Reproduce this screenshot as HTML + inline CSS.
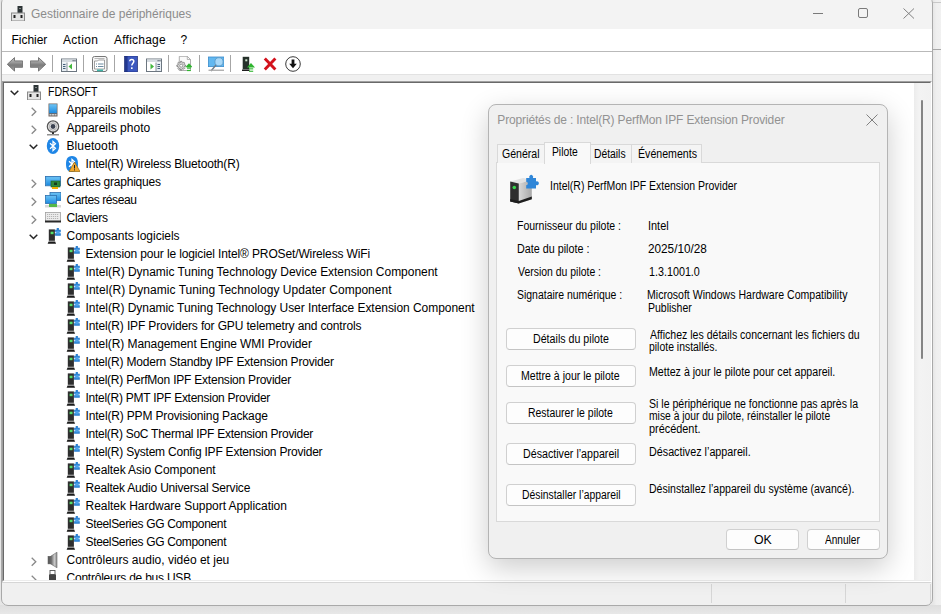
<!DOCTYPE html><html><head><meta charset="utf-8"><title>Gestionnaire de périphériques</title><style>
*{margin:0;padding:0;box-sizing:border-box}
html,body{width:941px;height:614px;overflow:hidden}
body{position:relative;background:#e6e6e6;font-family:"Liberation Sans",sans-serif;color:#000}
.a{position:absolute}
.t{position:absolute;white-space:pre;font-size:12px;line-height:18px;letter-spacing:-0.04px;color:#000}
.d{position:absolute;white-space:pre;font-size:12px;line-height:13px;letter-spacing:0;color:#000;transform-origin:0 0}
svg.i{position:absolute;width:16px;height:16px;overflow:visible}
.sep{position:absolute;top:55px;width:1px;height:17px;background:#a6a6a6}
.btn{position:absolute;background:#fdfdfd;border:1px solid #d0d0d0;border-bottom-color:#c4c4c4;border-radius:4px;text-align:center;font-size:11.5px;letter-spacing:-0.48px;line-height:20px}
</style></head><body>

<svg width="0" height="0" style="position:absolute">
<defs>
<linearGradient id="gArrow" x1="0" y1="0" x2="0" y2="1"><stop offset="0" stop-color="#c4c4c4"/><stop offset="0.35" stop-color="#9c9c9c"/><stop offset="0.55" stop-color="#7c7c7c"/><stop offset="1" stop-color="#a4a4a4"/></linearGradient>
<linearGradient id="gBlue" x1="0" y1="0" x2="0" y2="1"><stop offset="0" stop-color="#6cc3f5"/><stop offset="1" stop-color="#1d8be0"/></linearGradient>
<linearGradient id="gHelp" x1="0" y1="0" x2="1" y2="1"><stop offset="0" stop-color="#4a6fd8"/><stop offset="1" stop-color="#1c2f8f"/></linearGradient>
<linearGradient id="gSpk" x1="0" y1="0" x2="1" y2="0"><stop offset="0" stop-color="#5a5a5a"/><stop offset="0.6" stop-color="#c8c8c8"/><stop offset="1" stop-color="#8a8a8a"/></linearGradient>
<linearGradient id="gTower" x1="0" y1="0" x2="1" y2="0"><stop offset="0" stop-color="#d8d8d8"/><stop offset="1" stop-color="#a8a8a8"/></linearGradient>

<symbol id="iComp" viewBox="0 0 16 16">
 <rect x="7.5" y="1" width="5" height="7" fill="#2d3436"/>
 <rect x="9.5" y="3" width="1" height="1" fill="#ddd"/>
 <rect x="1.5" y="8" width="13" height="8" fill="#e4e4e4" stroke="#8a8a8a" stroke-width="1"/>
 <rect x="3.5" y="10" width="2" height="3" fill="#222"/>
 <rect x="10.5" y="10" width="2" height="3" fill="#222"/>
</symbol>

<symbol id="iMobile" viewBox="0 0 16 16">
 <rect x="3.5" y="1.5" width="9" height="13" fill="#6e6460"/>
 <rect x="4.2" y="2.2" width="7.6" height="9" fill="url(#gBlue)"/>
 <rect x="4.5" y="12" width="2" height="1.5" fill="#ccc"/><rect x="7" y="12" width="2" height="1.5" fill="#ccc"/><rect x="9.5" y="12" width="2" height="1.5" fill="#ccc"/>
</symbol>

<symbol id="iCam" viewBox="0 0 16 16">
 <circle cx="8" cy="6.5" r="5.7" fill="#e0e0e0" stroke="#555" stroke-width="1.2"/>
 <circle cx="8" cy="6.5" r="3.6" fill="#f4f4f4" stroke="#999" stroke-width="0.8"/>
 <circle cx="8" cy="6.5" r="2.4" fill="#3b4250"/>
 <rect x="7" y="12" width="2" height="2" fill="#333"/>
 <rect x="2" y="14.2" width="12" height="1.2" fill="#777"/>
</symbol>

<symbol id="iBT" viewBox="0 0 16 16">
 <ellipse cx="8" cy="8" rx="6.2" ry="8" fill="#1f86e6"/>
 <path d="M5 5.2 L10.5 10.3 L8 12.6 L8 3.4 L10.5 5.7 L5 10.8" fill="none" stroke="#fff" stroke-width="1.2"/>
</symbol>

<symbol id="iBTW" viewBox="0 0 16 16">
 <path d="M8 0 C3 0 2 4 2 8 C2 12 3 16 8 16 C13 16 14 12 14 8 C14 4 13 0 8 0Z" fill="#1f86e6"/>
 <path d="M5 5.2 L10.5 10.3 L8 12.6 L8 3.4 L10.5 5.7 L5 10.8" fill="none" stroke="#fff" stroke-width="1.2"/>
 <path d="M10.5 6 L16 15.5 L5 15.5 Z" fill="#f0a830" stroke="#9a6a10" stroke-width="0.7"/>
 <rect x="10" y="9" width="1" height="3.5" fill="#222"/><rect x="10" y="13.3" width="1" height="1.1" fill="#222"/>
</symbol>

<symbol id="iGPU" viewBox="0 0 16 16">
 <rect x="0.5" y="2.4" width="15" height="9.4" fill="#4aa8ea" stroke="#2c6fae" stroke-width="0.8"/>
 <rect x="1.3" y="3.2" width="13.4" height="7.8" fill="url(#gBlue)"/>
 <rect x="6" y="7" width="9" height="6" fill="#2e8b3a" stroke="#1d5a25" stroke-width="0.6"/>
 <rect x="9" y="8.5" width="3" height="2.5" fill="#163e1b"/>
 <rect x="7" y="13" width="6" height="2" fill="#f1b000"/>
</symbol>

<symbol id="iNet" viewBox="0 0 16 16">
 <rect x="5" y="0.5" width="11" height="8" fill="url(#gBlue)" stroke="#2c6fae" stroke-width="0.8"/>
 <rect x="0.5" y="3.5" width="11" height="8" fill="url(#gBlue)" stroke="#2c6fae" stroke-width="0.8"/>
 <rect x="0" y="13" width="16" height="2.5" fill="#d8d8d8"/>
 <rect x="4" y="12" width="8" height="3" fill="#55b848"/>
</symbol>

<symbol id="iKbd" viewBox="0 0 16 16">
 <rect x="0.5" y="2.5" width="15" height="9" fill="#ececec" stroke="#a0a0a0" stroke-width="0.8"/>
 <path d="M2 4.5h12M2 6.5h12M2 8.5h12" stroke="#b4b4b4" stroke-width="1" stroke-dasharray="1.2 0.8"/>
 <rect x="0" y="10.5" width="16" height="2" fill="#2a2a2a"/>
</symbol>

<symbol id="iSW" viewBox="0 0 16 16">
 <rect x="3.8" y="1.4" width="6.1" height="11.4" fill="#2e2e2e"/>
 <rect x="5.6" y="3.7" width="2.9" height="2.5" fill="#55e06a"/>
 <path d="M3.6 13.4h6.5l1 2.3h-8.5z" fill="#1a1a1a"/>
 <path d="M10.1 1.7h1.6v-1.7h2.2v1.7h1.9v6.1h-5.7z" fill="#2a7fd0"/>
 <rect x="11.3" y="2.8" width="3.4" height="3.6" fill="#4aa0e8"/>
 <circle cx="10.6" cy="4.6" r="0.8" fill="#cfe6fa"/><circle cx="15.3" cy="4.6" r="0.8" fill="#cfe6fa"/>
</symbol>

<symbol id="iSpk" viewBox="0 0 16 16">
 <rect x="3" y="4.3" width="2.8" height="7.6" fill="#5e5e5e" stroke="#555" stroke-width="0.5"/>
 <path d="M5.6 4.3 L12 0.2 L12 15.8 L5.6 11.9 Z" fill="url(#gSpk)" stroke="#6a6a6a" stroke-width="0.6"/>
</symbol>

<symbol id="iUSB" viewBox="0 0 16 16">
 <rect x="5" y="0.5" width="5" height="4" fill="#fff" stroke="#555" stroke-width="0.9"/>
 <rect x="4" y="4.5" width="7" height="11" fill="#444"/>
</symbol>

<symbol id="tBack" viewBox="0 0 16 16">
 <path d="M0.3 8.3 L7.5 1.6 L7.5 4.9 L15.6 4.9 L15.6 11.3 L7.5 11.3 L7.5 15.1 Z" fill="url(#gArrow)" stroke="#6e6e6e" stroke-width="0.9" stroke-linejoin="round"/>
</symbol>
<symbol id="tFwd" viewBox="0 0 16 16">
 <path d="M15.7 8.3 L8.5 1.6 L8.5 4.9 L0.4 4.9 L0.4 11.3 L8.5 11.3 L8.5 15.1 Z" fill="url(#gArrow)" stroke="#6e6e6e" stroke-width="0.9" stroke-linejoin="round"/>
</symbol>
<symbol id="tTree" viewBox="0 0 16 16">
 <rect x="0.5" y="3" width="15" height="12.5" fill="#fff" stroke="#6c7680" stroke-width="1"/>
 <rect x="1" y="3.5" width="14" height="2.5" fill="#d6dce2"/>
 <rect x="11.5" y="4" width="1.3" height="1.3" fill="#6c7680"/><rect x="13.3" y="4" width="1.3" height="1.3" fill="#6c7680"/>
 <rect x="1" y="6.5" width="4.8" height="8.5" fill="#e6edf3"/>
 <path d="M6 6.5v8.5" stroke="#6c7680" stroke-width="0.8"/>
 <path d="M2 8.5h2.5M2 10.5h2.5M2 12.5h2.5" stroke="#46607a" stroke-width="1"/>
 <path d="M11 7.5 L7.5 10.5 L11 13.5Z" fill="#44b83f"/>
</symbol>
<symbol id="tProp" viewBox="0 0 16 16">
 <rect x="0.5" y="0.5" width="14.5" height="15" rx="2" fill="#f6f6f6" stroke="#777" stroke-width="1"/>
 <path d="M2.5 2.5h10" stroke="#aaa" stroke-width="0.8"/>
 <path d="M2.5 13V5h3l1-1h6v9z" fill="#fff" stroke="#8a8a8a" stroke-width="0.8"/>
 <path d="M4 8h1M6 8h5.5M4 10.5h1M6 10.5h5.5" stroke="#6d8aa0" stroke-width="1"/>
 <rect x="5" y="13.5" width="6" height="1.8" fill="#3fb3a8"/>
</symbol>
<symbol id="tHelp" viewBox="0 0 16 16">
 <rect x="1.6" y="0" width="12.8" height="16" fill="#22388f" stroke="#1a2a70" stroke-width="0.7"/>
 <rect x="4.6" y="0.4" width="9.4" height="15.2" fill="#3c58bf"/>
 <path d="M6.8 5.2 C6.8 3 10.8 3 10.8 5.3 C10.8 7.2 8.8 7.3 8.8 9.6" fill="none" stroke="#fff" stroke-width="1.5"/>
 <rect x="8" y="11.3" width="1.6" height="1.7" fill="#fff"/>
</symbol>
<symbol id="tPane" viewBox="0 0 16 16">
 <rect x="0.5" y="3" width="15" height="12.5" fill="#fff" stroke="#6c7680" stroke-width="1"/>
 <rect x="1" y="3.5" width="14" height="2.5" fill="#d6dce2"/>
 <rect x="11.5" y="4" width="1.3" height="1.3" fill="#6c7680"/><rect x="13.3" y="4" width="1.3" height="1.3" fill="#6c7680"/>
 <rect x="10.2" y="6.5" width="4.8" height="8.5" fill="#e6edf3"/>
 <path d="M10 6.5v8.5" stroke="#6c7680" stroke-width="0.8"/>
 <path d="M11.5 8.5h2.5M11.5 10.5h2.5M11.5 12.5h2.5" stroke="#46607a" stroke-width="1"/>
 <path d="M4.5 7.5 L8 10.5 L4.5 13.5Z" fill="#44b83f"/>
</symbol>
<symbol id="tUpd" viewBox="0 0 16 16">
 <path d="M3.3 0.3 h8 l3.2 3.2 v11 h-11.2z" fill="#fafafa" stroke="#9a9a9a" stroke-width="0.8"/>
 <path d="M11.3 0.3v3.2h3.2" fill="none" stroke="#9a9a9a" stroke-width="0.7"/>
 <path d="M9.55 9.01 L9.55 10.39 L8.30 10.50 L7.95 11.33 L8.76 12.29 L7.79 13.26 L6.83 12.45 L6.00 12.80 L5.89 14.05 L4.51 14.05 L4.40 12.80 L3.57 12.45 L2.61 13.26 L1.64 12.29 L2.45 11.33 L2.10 10.50 L0.85 10.39 L0.85 9.01 L2.10 8.90 L2.45 8.07 L1.64 7.11 L2.61 6.14 L3.57 6.95 L4.40 6.60 L4.51 5.35 L5.89 5.35 L6.00 6.60 L6.83 6.95 L7.79 6.14 L8.76 7.11 L7.95 8.07 L8.30 8.90Z" fill="#dadada" stroke="#6a6a6a" stroke-width="0.7"/>
 <circle cx="5.2" cy="9.7" r="1.5" fill="#fff" stroke="#6a6a6a" stroke-width="0.6"/>
 <path d="M13 7.2 L16.7 11.2 L9.3 11.2Z" fill="#2fb52f"/>
 <rect x="11" y="11.4" width="3.8" height="1.3" fill="#2fb52f"/>
 <rect x="11" y="13.9" width="3.8" height="1.2" fill="#2fb52f"/>
</symbol>
<symbol id="tScan" viewBox="0 0 16 16">
 <rect x="0.4" y="1" width="15.6" height="9.6" fill="#62b8f0" stroke="#3c8ccc" stroke-width="0.8"/>
 <circle cx="11" cy="5.8" r="4.1" fill="#a8d8f8" stroke="#5d9cc8" stroke-width="0.9"/>
 <path d="M8 9 L3 15" stroke="#6e7c88" stroke-width="1.4"/>
 <rect x="0.5" y="13.6" width="15.5" height="1.3" fill="#a9a9a9"/>
</symbol>
<symbol id="tEnable" viewBox="0 0 16 16">
 <rect x="2.7" y="0.8" width="6.5" height="12.5" fill="#25302a"/>
 <rect x="5.3" y="3.3" width="2" height="2" fill="#cfe8d0"/>
 <rect x="2" y="13.5" width="7.5" height="1.5" fill="#1e1e1e"/>
 <path d="M11 7 L15 11.6 L6.9 11.6Z" fill="#2fb52f"/>
 <rect x="9" y="12.3" width="4.2" height="1.1" fill="#2fb52f"/>
 <rect x="9" y="14.7" width="4.2" height="1.1" fill="#2fb52f"/>
</symbol>
<symbol id="tDel" viewBox="0 0 16 16">
 <path d="M2.8 2.6 L13.4 13.6 M13.4 2.6 L2.8 13.6" stroke="#d3121c" stroke-width="2.9"/>
</symbol>
<symbol id="tDown" viewBox="0 0 16 16">
 <circle cx="8" cy="8" r="7.3" fill="#fff" stroke="#3a3a3a" stroke-width="1"/>
 <path d="M6.6 3.6h2.8v4.2h2.4L8 12.2 L4.2 7.8h2.4z" fill="#111"/>
</symbol>

<symbol id="dDev" viewBox="0 0 44 42">
 <path d="M8.2 13.4 L21.2 9.9 L29.8 12 L16.8 15.4 Z" fill="#e2e2e2"/>
 <path d="M16.8 15.4 L29.8 12 L29.8 31.2 L16.8 35.6 Z" fill="url(#gTower)"/>
 <path d="M8.2 13.4 L16.8 15.4 L16.8 35.6 L8.2 33.6 Z" fill="#2e2e2e"/>
 <path d="M8.2 31 L16.8 33 L29.8 28.6 L29.8 31.2 L16.8 35.6 L8.2 33.6Z" fill="#1e1e1e"/>
 <circle cx="12.3" cy="19.5" r="1.8" fill="#37d34a"/>
 <path d="M24.2 10 h3.3 a2 2 0 1 1 3.4 0 h3.1 v3.4 a2 2 0 1 1 0 3.6 v3.6 h-9.8 v-3.4 a1.7 1.7 0 1 0 0 -3.4z" fill="#2f86d8"/>
</symbol>
</defs>
</svg>

<div class="a" style="left:933px;top:0;width:8px;height:606px;background:linear-gradient(90deg,#e6e6e6,#efefef 40%,#f1f1f1)"></div>
<div class="a" style="left:933px;top:49px;width:8px;height:1px;background:#a8a8a8"></div>
<div class="a" style="left:933px;top:2px;width:8px;height:1px;background:#c8c8c8"></div>
<div class="a" style="left:0;top:605px;width:941px;height:9px;background:linear-gradient(#dedede,#e8e8e8)"></div>
<div class="a" style="left:1px;top:-4px;width:932px;height:610px;border-radius:7px;overflow:hidden;background:#f0f0f0"><div class="a" style="left:0;top:4px;width:932px;height:606px">
<div class="a" style="left:0;top:0;width:932px;height:29px;background:#f3f3f3"></div>
<svg class="i" style="left:9px;top:5px;width:16px;height:16px"><use href="#iComp"/></svg>
<div class="t" style="left:30px;top:5px;color:#8c8c8c;letter-spacing:-0.02px">Gestionnaire de périphériques</div>
<div class="a" style="left:812px;top:13px;width:10px;height:1px;background:#7a7a7a"></div>
<div class="a" style="left:857px;top:8px;width:10px;height:10px;border:1px solid #7a7a7a;border-radius:2px"></div>
<svg class="a" style="left:902px;top:8px" width="12" height="11"><path d="M0.5 0.5L11 10.5M11 0.5L0.5 10.5" stroke="#808080" stroke-width="1"/></svg>
<div class="a" style="left:0;top:29px;width:932px;height:22px;background:#fff"></div>
<div class="t" style="left:10.5px;top:31px;letter-spacing:-0.04px">Fichier</div>
<div class="t" style="left:62px;top:31px;letter-spacing:0.3px">Action</div>
<div class="t" style="left:113px;top:31px;letter-spacing:0.23px">Affichage</div>
<div class="t" style="left:179.5px;top:31px;letter-spacing:0px">?</div>
<div class="a" style="left:0;top:51px;width:932px;height:1px;background:#b9b9b9"></div>
<div class="a" style="left:0;top:52px;width:932px;height:22px;background:#fff"></div>
<svg class="i" style="left:6px;top:56px"><use href="#tBack"/></svg>
<svg class="i" style="left:29px;top:56px"><use href="#tFwd"/></svg>
<svg class="i" style="left:60px;top:56px"><use href="#tTree"/></svg>
<svg class="i" style="left:91px;top:56px"><use href="#tProp"/></svg>
<svg class="i" style="left:122px;top:56px"><use href="#tHelp"/></svg>
<svg class="i" style="left:145px;top:56px"><use href="#tPane"/></svg>
<svg class="i" style="left:175px;top:56px"><use href="#tUpd"/></svg>
<svg class="i" style="left:207px;top:56px"><use href="#tScan"/></svg>
<svg class="i" style="left:239px;top:56px"><use href="#tEnable"/></svg>
<svg class="i" style="left:261px;top:56px"><use href="#tDel"/></svg>
<svg class="i" style="left:284px;top:56px"><use href="#tDown"/></svg>
<div class="sep" style="left:51px"></div>
<div class="sep" style="left:82px"></div>
<div class="sep" style="left:113px"></div>
<div class="sep" style="left:167px"></div>
<div class="sep" style="left:198px"></div>
<div class="sep" style="left:229px"></div>
<div class="a" style="left:0;top:74px;width:932px;height:1px;background:#e2e2e2"></div>
<div class="a" style="left:0;top:75px;width:932px;height:6px;background:#f0f0f0"></div>
<div class="a" style="left:1px;top:81px;width:930px;height:501px;border-top:1px solid #a0a0a0;border-left:1px solid #a0a0a0;border-right:1px solid #fff;border-bottom:1px solid #fff;background:#fff"></div>
<div class="a" style="left:2px;top:82px;width:928px;height:499px;border-top:1px solid #696969;border-left:1px solid #696969;border-right:1px solid #f0f0f0;border-bottom:1px solid #ececec;background:#fff;overflow:hidden">
<svg class="a" style="left:5.9px;top:6.5px" width="9" height="6"><path d="M0.7 0.7L4.5 4.5L8.3 0.7" fill="none" stroke="#262626" stroke-width="1.5"/></svg>
<svg class="i" style="left:22px;top:1px"><use href="#iComp"/></svg>
<div class="t" style="left:43.5px;top:0px;transform:scaleX(0.875);transform-origin:0 0">FDRSOFT</div>
<svg class="a" style="left:27.1px;top:24px" width="6" height="10"><path d="M0.7 0.7L4.8 4.7L0.7 8.7" fill="none" stroke="#888" stroke-width="1.3"/></svg>
<svg class="i" style="left:41px;top:19px"><use href="#iMobile"/></svg>
<div class="t" style="left:62.5px;top:18px;letter-spacing:-0.028px">Appareils mobiles</div>
<svg class="a" style="left:27.1px;top:42px" width="6" height="10"><path d="M0.7 0.7L4.8 4.7L0.7 8.7" fill="none" stroke="#888" stroke-width="1.3"/></svg>
<svg class="i" style="left:41px;top:37px"><use href="#iCam"/></svg>
<div class="t" style="left:62.5px;top:36px;letter-spacing:0.024px">Appareils photo</div>
<svg class="a" style="left:24.9px;top:60.5px" width="9" height="6"><path d="M0.7 0.7L4.5 4.5L8.3 0.7" fill="none" stroke="#262626" stroke-width="1.5"/></svg>
<svg class="i" style="left:41px;top:55px"><use href="#iBT"/></svg>
<div class="t" style="left:62.5px;top:54px;letter-spacing:0.097px">Bluetooth</div>
<svg class="i" style="left:60px;top:73px"><use href="#iBTW"/></svg>
<div class="t" style="left:81.5px;top:72px;letter-spacing:-0.181px">Intel(R) Wireless Bluetooth(R)</div>
<svg class="a" style="left:27.1px;top:96px" width="6" height="10"><path d="M0.7 0.7L4.8 4.7L0.7 8.7" fill="none" stroke="#888" stroke-width="1.3"/></svg>
<svg class="i" style="left:41px;top:91px"><use href="#iGPU"/></svg>
<div class="t" style="left:62.5px;top:90px;letter-spacing:-0.228px">Cartes graphiques</div>
<svg class="a" style="left:27.1px;top:114px" width="6" height="10"><path d="M0.7 0.7L4.8 4.7L0.7 8.7" fill="none" stroke="#888" stroke-width="1.3"/></svg>
<svg class="i" style="left:41px;top:109px"><use href="#iNet"/></svg>
<div class="t" style="left:62.5px;top:108px;letter-spacing:-0.415px">Cartes réseau</div>
<svg class="a" style="left:27.1px;top:132px" width="6" height="10"><path d="M0.7 0.7L4.8 4.7L0.7 8.7" fill="none" stroke="#888" stroke-width="1.3"/></svg>
<svg class="i" style="left:41px;top:127px"><use href="#iKbd"/></svg>
<div class="t" style="left:62.5px;top:126px;letter-spacing:-0.269px">Claviers</div>
<svg class="a" style="left:24.9px;top:150.5px" width="9" height="6"><path d="M0.7 0.7L4.5 4.5L8.3 0.7" fill="none" stroke="#262626" stroke-width="1.5"/></svg>
<svg class="i" style="left:41px;top:145px"><use href="#iSW"/></svg>
<div class="t" style="left:62.5px;top:144px;letter-spacing:-0.014px">Composants logiciels</div>
<svg class="i" style="left:60px;top:163px"><use href="#iSW"/></svg>
<div class="t" style="left:81.5px;top:162px;letter-spacing:-0.131px">Extension pour le logiciel Intel® PROSet/Wireless WiFi</div>
<svg class="i" style="left:60px;top:181px"><use href="#iSW"/></svg>
<div class="t" style="left:81.5px;top:180px;letter-spacing:-0.03px">Intel(R) Dynamic Tuning Technology Device Extension Component</div>
<svg class="i" style="left:60px;top:199px"><use href="#iSW"/></svg>
<div class="t" style="left:81.5px;top:198px;letter-spacing:0.042px">Intel(R) Dynamic Tuning Technology Updater Component</div>
<svg class="i" style="left:60px;top:217px"><use href="#iSW"/></svg>
<div class="t" style="left:81.5px;top:216px;letter-spacing:-0.052px">Intel(R) Dynamic Tuning Technology User Interface Extension Component</div>
<svg class="i" style="left:60px;top:235px"><use href="#iSW"/></svg>
<div class="t" style="left:81.5px;top:234px;letter-spacing:-0.144px">Intel(R) IPF Providers for GPU telemetry and controls</div>
<svg class="i" style="left:60px;top:253px"><use href="#iSW"/></svg>
<div class="t" style="left:81.5px;top:252px;letter-spacing:-0.079px">Intel(R) Management Engine WMI Provider</div>
<svg class="i" style="left:60px;top:271px"><use href="#iSW"/></svg>
<div class="t" style="left:81.5px;top:270px;letter-spacing:-0.184px">Intel(R) Modern Standby IPF Extension Provider</div>
<svg class="i" style="left:60px;top:289px"><use href="#iSW"/></svg>
<div class="t" style="left:81.5px;top:288px;letter-spacing:-0.219px">Intel(R) PerfMon IPF Extension Provider</div>
<svg class="i" style="left:60px;top:307px"><use href="#iSW"/></svg>
<div class="t" style="left:81.5px;top:306px;letter-spacing:-0.264px">Intel(R) PMT IPF Extension Provider</div>
<svg class="i" style="left:60px;top:325px"><use href="#iSW"/></svg>
<div class="t" style="left:81.5px;top:324px;letter-spacing:-0.159px">Intel(R) PPM Provisioning Package</div>
<svg class="i" style="left:60px;top:343px"><use href="#iSW"/></svg>
<div class="t" style="left:81.5px;top:342px;letter-spacing:-0.271px">Intel(R) SoC Thermal IPF Extension Provider</div>
<svg class="i" style="left:60px;top:361px"><use href="#iSW"/></svg>
<div class="t" style="left:81.5px;top:360px;letter-spacing:-0.22px">Intel(R) System Config IPF Extension Provider</div>
<svg class="i" style="left:60px;top:379px"><use href="#iSW"/></svg>
<div class="t" style="left:81.5px;top:378px;letter-spacing:-0.092px">Realtek Asio Component</div>
<svg class="i" style="left:60px;top:397px"><use href="#iSW"/></svg>
<div class="t" style="left:81.5px;top:396px;letter-spacing:-0.197px">Realtek Audio Universal Service</div>
<svg class="i" style="left:60px;top:415px"><use href="#iSW"/></svg>
<div class="t" style="left:81.5px;top:414px;letter-spacing:-0.04px">Realtek Hardware Support Application</div>
<svg class="i" style="left:60px;top:433px"><use href="#iSW"/></svg>
<div class="t" style="left:81.5px;top:432px;letter-spacing:-0.336px">SteelSeries GG Component</div>
<svg class="i" style="left:60px;top:451px"><use href="#iSW"/></svg>
<div class="t" style="left:81.5px;top:450px;letter-spacing:-0.336px">SteelSeries GG Component</div>
<svg class="a" style="left:27.1px;top:474px" width="6" height="10"><path d="M0.7 0.7L4.8 4.7L0.7 8.7" fill="none" stroke="#888" stroke-width="1.3"/></svg>
<svg class="i" style="left:41px;top:469px"><use href="#iSpk"/></svg>
<div class="t" style="left:62.5px;top:468px;letter-spacing:-0.0px">Contrôleurs audio, vidéo et jeu</div>
<svg class="a" style="left:27.1px;top:492px" width="6" height="10"><path d="M0.7 0.7L4.8 4.7L0.7 8.7" fill="none" stroke="#888" stroke-width="1.3"/></svg>
<svg class="i" style="left:41px;top:487px"><use href="#iUSB"/></svg>
<div class="t" style="left:62.5px;top:486px;letter-spacing:-0.226px">Contrôleurs de bus USB</div>
<div class="a" style="left:910px;top:0;width:17px;height:499px;background:linear-gradient(90deg,#ececec,#f3f3f3 30%,#f1f1f1)"></div>
<div class="a" style="left:917px;top:17px;width:2px;height:259px;background:#858585;border-radius:1px"></div>
</div>
<div class="a" style="left:1px;top:582px;width:929px;height:1px;background:#d6d6d6"></div>
<div class="a" style="left:710px;top:584px;width:1px;height:19px;background:#d6d6d6"></div>
<div class="a" style="left:844px;top:584px;width:1px;height:19px;background:#d6d6d6"></div>
<div class="a" style="left:929px;top:584px;width:1px;height:19px;background:#d6d6d6"></div>
</div></div>
<div class="a" style="left:1px;top:-4px;width:932px;height:610px;border-radius:7px;border:1px solid #a9a9a9;pointer-events:none"></div>
<div class="a" style="left:488px;top:104px;width:400px;height:455px;background:#f0f0f0;border:1px solid #b4b4b4;border-radius:8px;box-shadow:0 9px 28px rgba(0,0,0,0.2)">
<div class="t" style="left:8.300000000000011px;top:6px;font-size:12px;letter-spacing:-0.15px;color:#929292">Propriétés de : Intel(R) PerfMon IPF Extension Provider</div>
<svg class="a" style="left:377px;top:9px" width="12" height="12"><path d="M0.5 0.5L11.5 11.5M11.5 0.5L0.5 11.5" stroke="#808080" stroke-width="1"/></svg>
<div class="a" style="left:7px;top:57px;width:384px;height:360px;background:#f9f9f9;border:1px solid #d9d9d9"></div>
<div class="a" style="left:8px;top:39px;width:48px;height:19px;background:#f4f4f4;border:1px solid #d9d9d9;border-bottom:none"></div>
<div class="a" style="left:100px;top:39px;width:43px;height:19px;background:#f4f4f4;border:1px solid #d9d9d9;border-bottom:none"></div>
<div class="a" style="left:142px;top:39px;width:71px;height:19px;background:#f4f4f4;border:1px solid #d9d9d9;border-bottom:none"></div>
<div class="a" style="left:55px;top:37px;width:47px;height:22px;background:#f9f9f9;border:1px solid #d9d9d9;border-bottom:none"></div>
<svg class="a" style="left:13px;top:63px" width="44" height="42"><use href="#dDev"/></svg>
<div class="btn" style="left:17px;top:223px;width:130px;height:22px"></div>
<div class="btn" style="left:17px;top:260px;width:130px;height:22px"></div>
<div class="btn" style="left:17px;top:297px;width:130px;height:22px"></div>
<div class="btn" style="left:17px;top:338px;width:130px;height:22px"></div>
<div class="btn" style="left:17px;top:379px;width:130px;height:22px"></div>
<div class="btn" style="left:237px;top:424px;width:73px;height:21px"></div>
<div class="btn" style="left:318px;top:424px;width:73px;height:21px"></div>
<div class="d" style="left:13.23px;top:42.54px;transform:scaleX(0.8806)">Général</div>
<div class="d" style="left:63.16px;top:40.54px;transform:scaleX(0.8581)">Pilote</div>
<div class="d" style="left:105.06px;top:42.54px;transform:scaleX(0.8610)">Détails</div>
<div class="d" style="left:149.02px;top:42.54px;transform:scaleX(0.8847)">Événements</div>
<div class="d" style="left:60.72px;top:74.84px;transform:scaleX(0.8738)">Intel(R) PerfMon IPF Extension Provider</div>
<div class="d" style="left:28.32px;top:114.84px;transform:scaleX(0.8761)">Fournisseur du pilote :</div>
<div class="d" style="left:28.30px;top:137.84px;transform:scaleX(0.8975)">Date du pilote :</div>
<div class="d" style="left:29.30px;top:160.84px;transform:scaleX(0.8702)">Version du pilote :</div>
<div class="d" style="left:28.33px;top:183.84px;transform:scaleX(0.8714)">Signataire numérique :</div>
<div class="d" style="left:158.77px;top:114.84px;transform:scaleX(0.9115)">Intel</div>
<div class="d" style="left:158.65px;top:137.84px;transform:scaleX(0.9793)">2025/10/28</div>
<div class="d" style="left:159.50px;top:160.84px;transform:scaleX(0.8964)">1.3.1001.0</div>
<div class="d" style="left:158.43px;top:183.84px;transform:scaleX(0.8787)">Microsoft Windows Hardware Compatibility</div>
<div class="d" style="left:158.83px;top:196.84px;transform:scaleX(0.8754)">Publisher</div>
<div class="d" style="left:43.69px;top:227.84px;transform:scaleX(0.8881)">Détails du pilote</div>
<div class="d" style="left:32.43px;top:264.74px;transform:scaleX(0.8802)">Mettre à jour le pilote</div>
<div class="d" style="left:39.05px;top:302.14px;transform:scaleX(0.8710)">Restaurer le pilote</div>
<div class="d" style="left:33.92px;top:343.34px;transform:scaleX(0.8894)">Désactiver l’appareil</div>
<div class="d" style="left:32.65px;top:384.24px;transform:scaleX(0.8647)">Désinstaller l’appareil</div>
<div class="d" style="left:265.30px;top:428.74px;transform:scaleX(1.0258)">OK</div>
<div class="d" style="left:336.42px;top:428.74px;transform:scaleX(0.8417)">Annuler</div>
<div class="d" style="left:161.00px;top:223.54px;transform:scaleX(0.8790)">Affichez les détails concernant les fichiers du</div>
<div class="d" style="left:160.03px;top:236.14px;transform:scaleX(0.8689)">pilote installés.</div>
<div class="d" style="left:160.01px;top:260.64px;transform:scaleX(0.8866)">Mettez à jour le pilote pour cet appareil.</div>
<div class="d" style="left:160.03px;top:292.74px;transform:scaleX(0.8804)">Si le périphérique ne fonctionne pas après la</div>
<div class="d" style="left:160.05px;top:305.34px;transform:scaleX(0.8595)">mise à jour du pilote, réinstaller le pilote</div>
<div class="d" style="left:159.99px;top:317.94px;transform:scaleX(0.9079)">précédent.</div>
<div class="d" style="left:160.01px;top:340.64px;transform:scaleX(0.8964)">Désactivez l’appareil.</div>
<div class="d" style="left:160.02px;top:377.74px;transform:scaleX(0.8773)">Désinstallez l’appareil du système (avancé).</div>
</div>
</body></html>
